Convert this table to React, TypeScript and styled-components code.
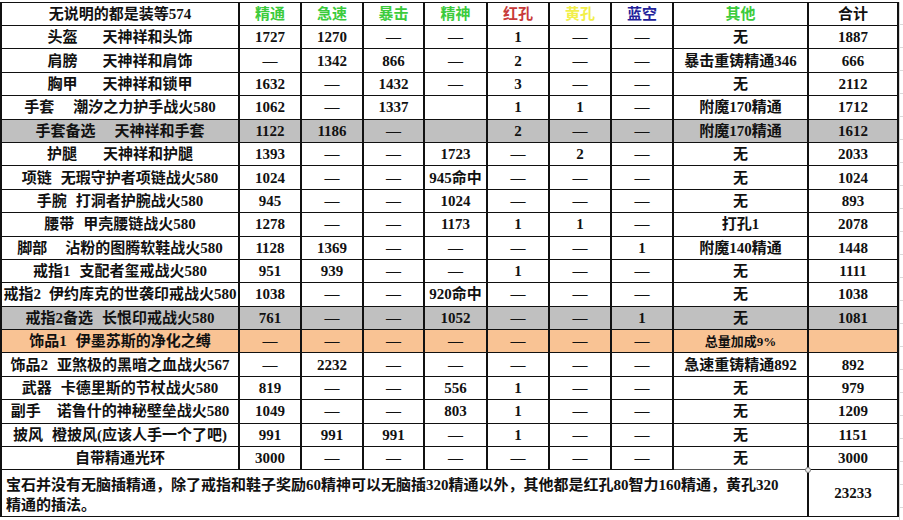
import React from 'react';
import styled, { createGlobalStyle } from 'styled-components';

// 全体のスタイル
const GlobalStyle = createGlobalStyle`
  html, body {
    margin: 0;
    padding: 0;
    background: #ffffff;
  }
`;

const Sheet = styled.div`
  width: 903px;
  height: 520px;
  overflow: hidden;
  padding-top: 2px;
  box-sizing: border-box;
  background: #ffffff;
  display: flex;
  align-items: flex-start;
  font-family: 'Liberation Serif', 'Noto Sans CJK SC', serif;
  font-weight: 700;
  color: #111;
`;

const Table = styled.table`
  width: 897px;
  table-layout: fixed;
  border-collapse: collapse;
  font-size: 15px;
`;

const Row = styled.tr<{ $bg?: string; $h?: number }>`
  height: ${p => p.$h ?? 23.4}px;
  background: ${p => p.$bg ?? '#ffffff'};
`;

const Cell = styled.td<{ $color?: string }>`
  border-top: 1px solid #111;
  border-bottom: 1px solid #111;
  border-left: 2px solid #111;
  border-right: 2px solid #111;
  padding: 0;
  text-align: center;
  vertical-align: middle;
  white-space: nowrap;
  color: ${p => p.$color ?? '#111'};
  line-height: 20px;
`;

const HeadCell = styled(Cell)`
  font-weight: 700;
`;

const NameBox = styled.div`
  display: flex;
  justify-content: center;
  overflow: hidden;
  white-space: nowrap;
`;

const Spacer = styled.span<{ $w: number }>`
  display: inline-block;
  width: ${p => p.$w}px;
  flex: none;
`;

const BonusText = styled.span`
  font-size: 13px;
`;

// 最終行の「其他」セル（選択枠のような細い線）
const OtherCell = styled(Cell)`
  position: relative;
  border: 1px solid #555;
`;

const Handle = styled.span`
  position: absolute;
  right: -4px;
  bottom: -4px;
  width: 6px;
  height: 6px;
  box-sizing: border-box;
  border-radius: 50%;
  border: 1px solid #7a7a7a;
  background: #ececec;
  z-index: 2;
`;

const NoteCell = styled(Cell)`
  text-align: left;
  vertical-align: top;
  white-space: normal;
  padding: 5px 4px 0 4px;
  line-height: 20px;
`;

const Margin = styled.div`
  flex: 1;
  height: 100%;
  border-left: 1px solid #d6d6d6;
  background: repeating-linear-gradient(
    to bottom,
    #ffffff 0,
    #ffffff 22px,
    #d9d9d9 22px,
    #d9d9d9 23px
  );
`;

const DASH = '—';

type Item = {
  slot: string;
  gap?: number;
  desc?: string;
  v: string[];
  other: string;
  total: string;
  bg?: string;
  bonus?: boolean;
};

const rows: Item[] = [
  { slot: '头盔', gap: 25, desc: '天神祥和头饰', v: ['1727', '1270', DASH, DASH, '1', DASH, DASH], other: '无', total: '1887' },
  { slot: '肩膀', gap: 25, desc: '天神祥和肩饰', v: [DASH, '1342', '866', DASH, '2', DASH, DASH], other: '暴击重铸精通346', total: '666' },
  { slot: '胸甲', gap: 25, desc: '天神祥和锁甲', v: ['1632', DASH, '1432', DASH, '3', DASH, DASH], other: '无', total: '2112' },
  { slot: '手套', gap: 19, desc: '潮汐之力护手战火580', v: ['1062', DASH, '1337', '', '1', '1', DASH], other: '附魔170精通', total: '1712' },
  { slot: '手套备选', gap: 19, desc: '天神祥和手套', v: ['1122', '1186', DASH, '', '2', DASH, DASH], other: '附魔170精通', total: '1612', bg: '#c0c0c0' },
  { slot: '护腿', gap: 26, desc: '天神祥和护腿', v: ['1393', DASH, DASH, '1723', DASH, '2', DASH], other: '无', total: '2033' },
  { slot: '项链', gap: 9, desc: '无瑕守护者项链战火580', v: ['1024', DASH, DASH, '945命中', DASH, DASH, DASH], other: '无', total: '1024' },
  { slot: '手腕', gap: 9, desc: '打洞者护腕战火580', v: ['945', DASH, DASH, '1024', DASH, DASH, DASH], other: '无', total: '893' },
  { slot: '腰带', gap: 9, desc: '甲壳腰链战火580', v: ['1278', DASH, DASH, '1173', '1', '1', DASH], other: '打孔1', total: '2078' },
  { slot: '脚部', gap: 18, desc: '沾粉的图腾软鞋战火580', v: ['1128', '1369', DASH, DASH, DASH, DASH, '1'], other: '附魔140精通', total: '1448' },
  { slot: '戒指1', gap: 9, desc: '支配者玺戒战火580', v: ['951', '939', DASH, DASH, '1', DASH, DASH], other: '无', total: '1111' },
  { slot: '戒指2', gap: 8, desc: '伊约库克的世袭印戒战火580', v: ['1038', DASH, DASH, '920命中', DASH, DASH, DASH], other: '无', total: '1038' },
  { slot: '戒指2备选', gap: 9, desc: '长恨印戒战火580', v: ['761', DASH, DASH, '1052', DASH, DASH, '1'], other: '无', total: '1081', bg: '#c0c0c0' },
  { slot: '饰品1', gap: 9, desc: '伊墨苏斯的净化之缚', v: [DASH, DASH, DASH, DASH, DASH, DASH, DASH], other: '总量加成9%', total: '', bg: '#f9c394', bonus: true },
  { slot: '饰品2', gap: 9, desc: '亚煞极的黑暗之血战火567', v: [DASH, '2232', DASH, DASH, DASH, DASH, DASH], other: '急速重铸精通892', total: '892' },
  { slot: '武器', gap: 9, desc: '卡德里斯的节杖战火580', v: ['819', DASH, DASH, '556', '1', DASH, DASH], other: '无', total: '979' },
  { slot: '副手', gap: 16, desc: '诺鲁什的神秘壁垒战火580', v: ['1049', DASH, DASH, '803', '1', DASH, DASH], other: '无', total: '1209' },
  { slot: '披风', gap: 9, desc: '橙披风(应该人手一个了吧)', v: ['991', '991', '991', DASH, '1', DASH, DASH], other: '无', total: '1151' },
  { slot: '自带精通光环', v: ['3000', DASH, DASH, DASH, DASH, DASH, DASH], other: '无', total: '3000' },
];

const widths = [238, 62, 62, 61, 63, 62, 62, 62, 135, 90];

const GREEN = '#3ccb3c';

const headers: { label: string; color: string }[] = [
  { label: '精通', color: GREEN },
  { label: '急速', color: GREEN },
  { label: '暴击', color: GREEN },
  { label: '精神', color: GREEN },
  { label: '红孔', color: '#c83a3a' },
  { label: '黄孔', color: '#f2ef4a' },
  { label: '蓝空', color: '#22229a' },
  { label: '其他', color: GREEN },
  { label: '合计', color: '#111' },
];

const App: React.FC = () => {
  return (
    <>
      <GlobalStyle />
      <Sheet>
        <Table>
          <colgroup>
            {widths.map((w, i) => (
              <col key={i} style={{ width: w }} />
            ))}
          </colgroup>
          <tbody>
            <Row $h={23}>
              <HeadCell>无说明的都是装等574</HeadCell>
              {headers.map(h => (
                <HeadCell key={h.label} $color={h.color}>
                  {h.label}
                </HeadCell>
              ))}
            </Row>
            {rows.map((r, idx) => {
              const last = idx === rows.length - 1;
              return (
                <Row key={r.slot} $bg={r.bg}>
                  <Cell>
                    <NameBox>
                      {r.slot}
                      {r.desc && <Spacer $w={r.gap ?? 9} />}
                      {r.desc}
                    </NameBox>
                  </Cell>
                  {r.v.map((val, i) => (
                    <Cell key={i}>{val}</Cell>
                  ))}
                  {last ? (
                    <OtherCell>
                      {r.other}
                      <Handle />
                    </OtherCell>
                  ) : (
                    <Cell>{r.bonus ? <BonusText>{r.other}</BonusText> : r.other}</Cell>
                  )}
                  <Cell>{r.total}</Cell>
                </Row>
              );
            })}
            <Row $h={47}>
              <NoteCell colSpan={9}>
                宝石并没有无脑插精通，除了戒指和鞋子奖励60精神可以无脑插320精通以外，其他都是红孔80智力160精通，黄孔320
                <br />
                精通的插法。
              </NoteCell>
              <Cell>23233</Cell>
            </Row>
          </tbody>
        </Table>
        <Margin />
      </Sheet>
    </>
  );
};

export default App;
